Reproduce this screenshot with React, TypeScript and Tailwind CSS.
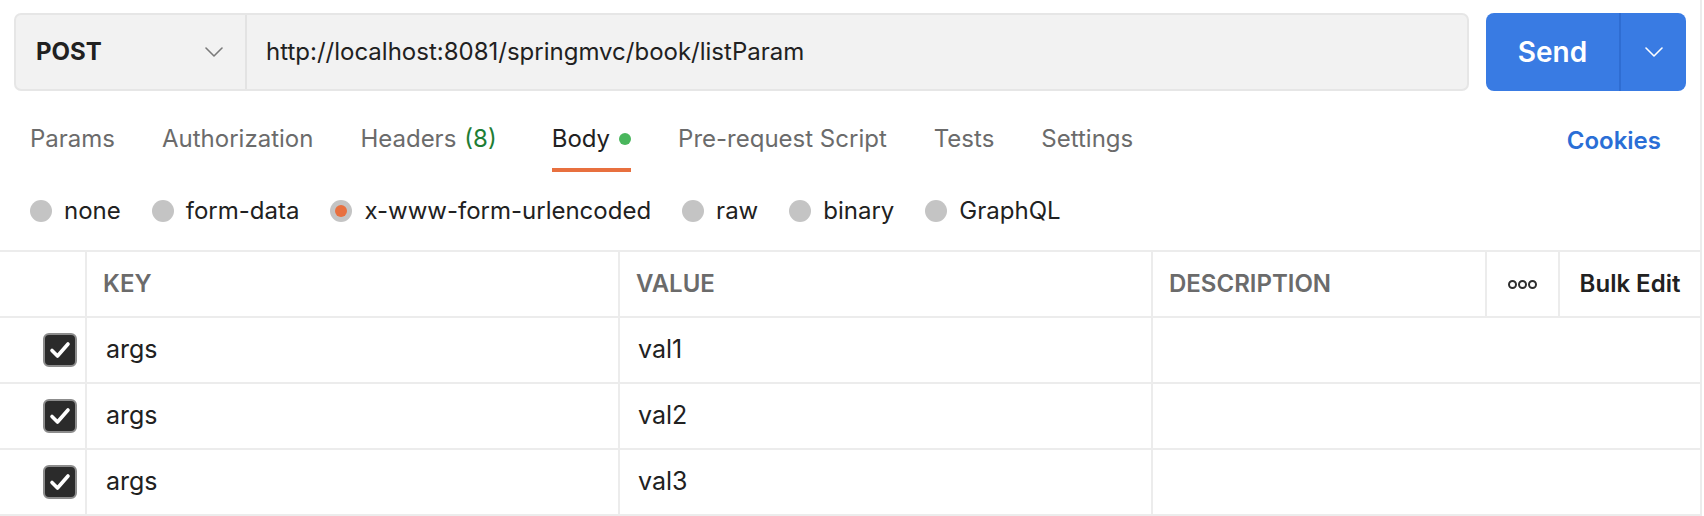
import React from "react";

function Chevron({ color, className }: { color: string; className?: string }) {
  return (
    <svg className={className} width="18" height="10" viewBox="0 0 18 10" fill="none">
      <polyline points="1,1 9,9 17,1" stroke={color} strokeWidth="1.6" strokeLinecap="round" strokeLinejoin="round" />
    </svg>
  );
}

function Radio({ label, selected }: { label: string; selected?: boolean }) {
  return (
    <div className="flex items-center gap-[12px]">
      <div className="w-[22px] h-[22px] rounded-full bg-[#c4c4c4] flex items-center justify-center">
        {selected && <div className="w-[12px] h-[12px] rounded-full bg-[#e8703f]" />}
      </div>
      <span className="text-[24px] text-[#212121]">{label}</span>
    </div>
  );
}

function Checkbox() {
  return (
    <div className="w-[34px] h-[34px] rounded-[6px] bg-[#2b2b2b] border-2 border-[#8c8c8c] flex items-center justify-center">
      <svg width="22" height="18" viewBox="0 0 22 18" fill="none">
        <polyline points="3,9.5 8.5,15 19,3" stroke="#ffffff" strokeWidth="3.6" strokeLinecap="round" strokeLinejoin="round" />
      </svg>
    </div>
  );
}

const rows = [
  { key: "args", value: "val1" },
  { key: "args", value: "val2" },
  { key: "args", value: "val3" },
];

export default function App() {
  return (
    <div className="w-[1704px] h-[516px] overflow-hidden bg-white font-[family-name:Inter,sans-serif]">
      <div className="w-[1702px] h-[516px] border-r-2 border-[#ececec] flex flex-col">
        {/* URL row */}
        <div className="flex pt-[13px] pl-[14px] pr-[14px] gap-[17px]">
          <div className="flex-1 h-[78px] bg-[#f2f2f2] border-2 border-[#e6e6e6] rounded-[7px] flex items-center">
            <div className="w-[231px] h-full flex items-center justify-between pl-[20px] pr-[22px] border-r-2 border-[#e3e3e3]">
              <span className="text-[24px] font-bold text-[#212121]">POST</span>
              <Chevron color="#7a7a7a" />
            </div>
            <span className="pl-[19px] text-[24px] text-[#212121]">http://localhost:8081/springmvc/book/listParam</span>
          </div>
          <div className="w-[200px] h-[78px] rounded-[8px] bg-[#397be3] flex">
            <div className="w-[135px] h-full flex items-center justify-center border-r-2 border-[#2f6dd2]">
              <span className="text-[28px] font-semibold text-white">Send</span>
            </div>
            <div className="flex-1 flex items-center justify-center">
              <Chevron color="#ffffff" />
            </div>
          </div>
        </div>

        {/* Tabs */}
        <div className="mt-[15px] flex items-end pl-[30px] pr-[39px]">
          <div className="flex gap-[47px] text-[24px] text-[#6b6b6b]">
            <div className="h-[66px] pt-[3px] flex items-center border-b-4 border-transparent">Params</div>
            <div className="h-[66px] pt-[3px] flex items-center border-b-4 border-transparent">Authorization</div>
            <div className="h-[66px] pt-[3px] flex items-center border-b-4 border-transparent">
              Headers<span className="ml-[8px] text-[#1e7d34]">(8)</span>
            </div>
            <div className="ml-[8px] h-[66px] pt-[3px] flex items-center border-b-4 border-[#e8703f] text-[#212121] gap-[9px]">
              Body<span className="w-[12px] h-[12px] rounded-full bg-[#49b65c]" />
            </div>
            <div className="h-[66px] pt-[3px] flex items-center border-b-4 border-transparent">Pre-request Script</div>
            <div className="h-[66px] pt-[3px] flex items-center border-b-4 border-transparent">Tests</div>
            <div className="h-[66px] pt-[3px] flex items-center border-b-4 border-transparent">Settings</div>
          </div>
          <div className="ml-auto h-[66px] pt-[3px] flex items-center text-[24px] font-semibold text-[#2a6ed6]">Cookies</div>
        </div>

        {/* Radios */}
        <div className="h-[80px] flex items-center pl-[30px] gap-[31px]">
          <Radio label="none" />
          <Radio label="form-data" />
          <Radio label="x-www-form-urlencoded" selected />
          <Radio label="raw" />
          <Radio label="binary" />
          <Radio label="GraphQL" />
        </div>

        {/* Table */}
        <div className="border-t-2 border-[#ececec]">
          <div className="flex h-[66px] border-b-2 border-[#ececec] text-[24px] font-semibold">
            <div className="w-[87px] border-r-2 border-[#ececec]" />
            <div className="w-[533px] border-r-2 border-[#ececec] flex items-center pl-[16px] text-[#6b6b6b]">KEY</div>
            <div className="w-[533px] border-r-2 border-[#ececec] flex items-center pl-[16px] text-[#6b6b6b]">VALUE</div>
            <div className="w-[334px] border-r-2 border-[#ececec] flex items-center pl-[16px] text-[#6b6b6b]">DESCRIPTION</div>
            <div className="w-[73px] border-r-2 border-[#ececec] flex items-center justify-center">
              <div className="flex gap-[1px]">
                <span className="w-[9px] h-[9px] rounded-full border-2 border-[#2e2e2e]" />
                <span className="w-[9px] h-[9px] rounded-full border-2 border-[#2e2e2e]" />
                <span className="w-[9px] h-[9px] rounded-full border-2 border-[#2e2e2e]" />
              </div>
            </div>
            <div className="flex-1 flex items-center justify-center text-[#212121]">Bulk Edit</div>
          </div>
          {rows.map((r, i) => (
            <div key={i} className="flex h-[66px] border-b-2 border-[#ececec] text-[25px] text-[#212121]">
              <div className="w-[87px] border-r-2 border-[#ececec] flex items-center pl-[43px]">
                <Checkbox />
              </div>
              <div className="w-[533px] border-r-2 border-[#ececec] flex items-center pl-[19px]">{r.key}</div>
              <div className="w-[533px] border-r-2 border-[#ececec] flex items-center pl-[18px]">{r.value}</div>
              <div className="flex-1" />
            </div>
          ))}
        </div>
      </div>
    </div>
  );
}
